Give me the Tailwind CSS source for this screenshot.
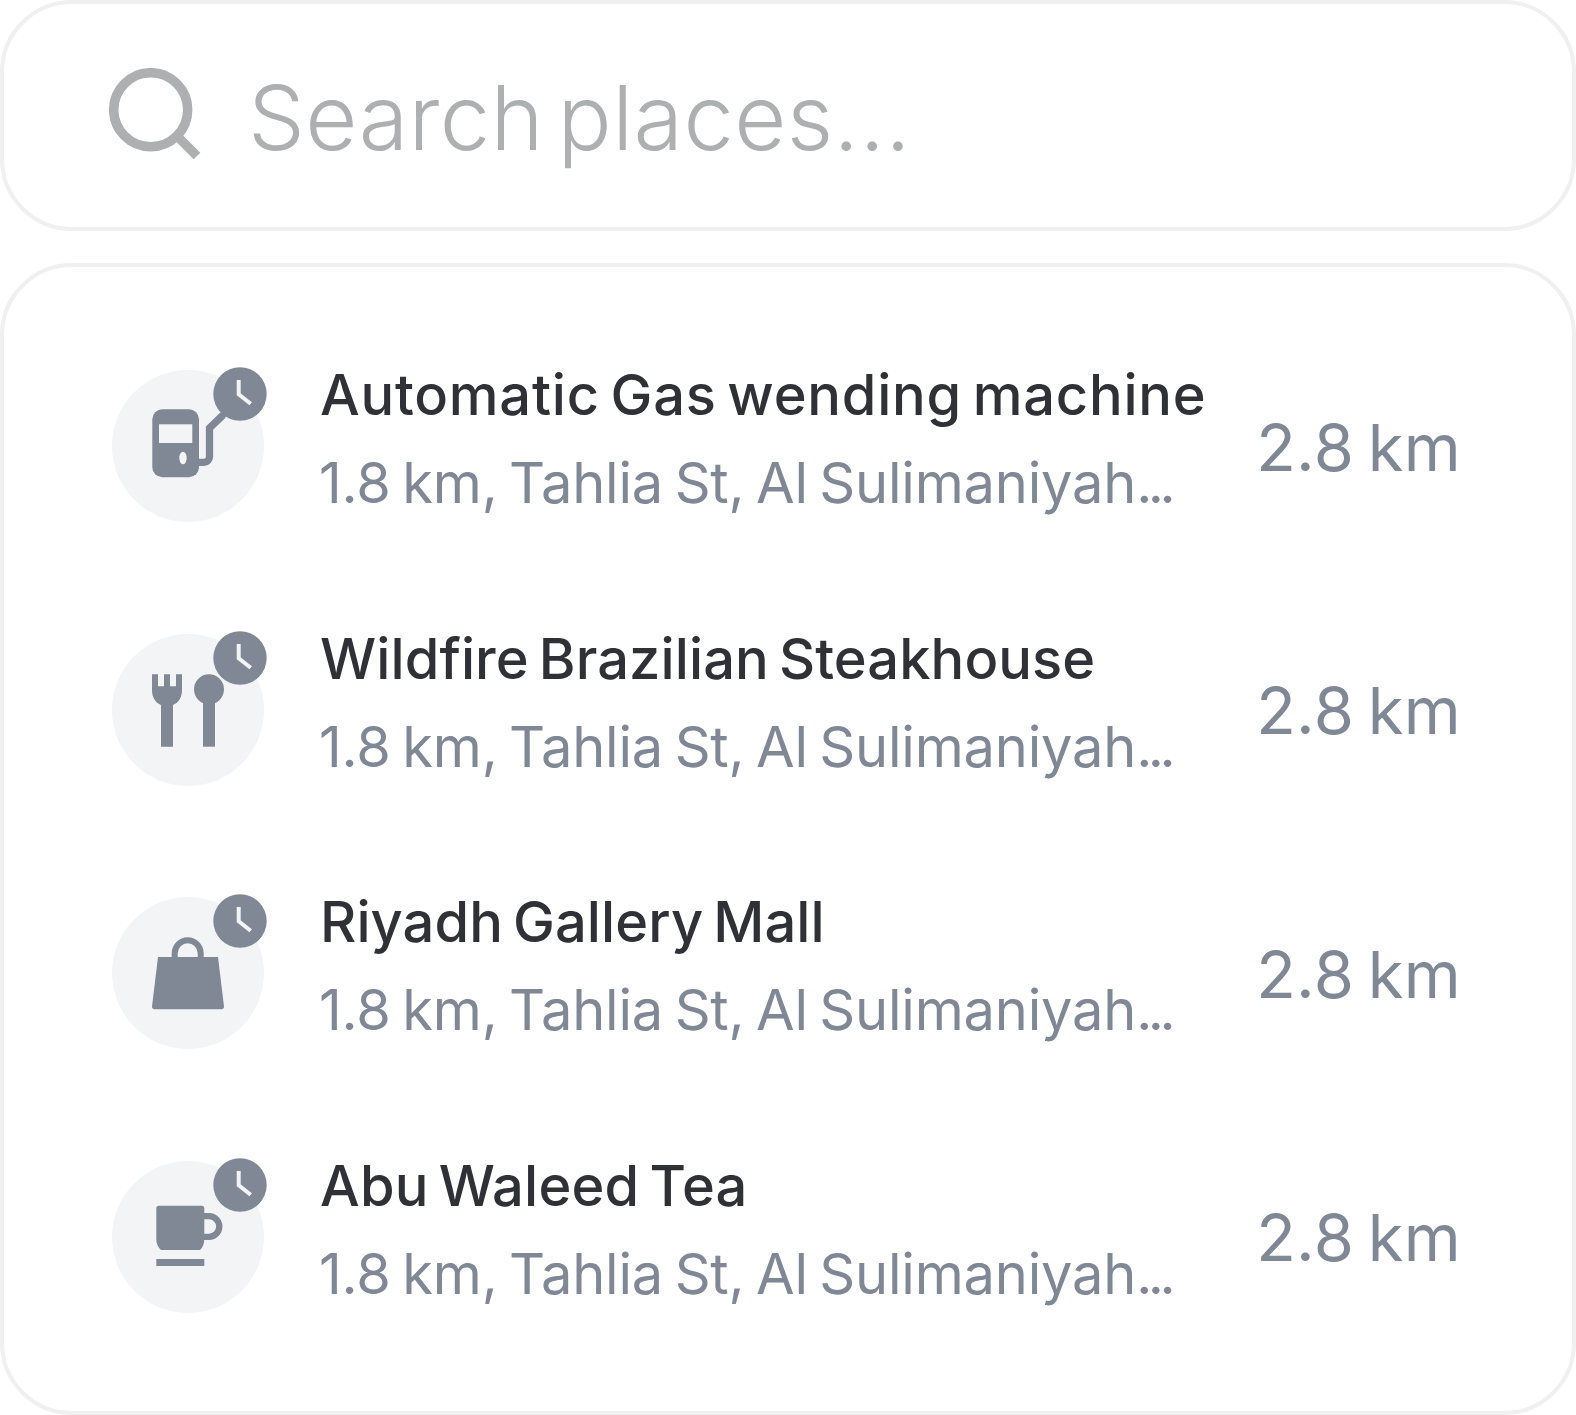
<!DOCTYPE html>
<html>
<head>
<meta charset="utf-8">
<script src="https://cdn.jsdelivr.net/npm/@tailwindcss/browser@4"></script>
</head>
<body class="bg-white font-['Inter',sans-serif]">
<div class="w-[1576px] h-[1415px] flex flex-col gap-[32px] overflow-hidden">
  <div class="h-[231px] shrink-0 border-4 border-[#f0f0f1] rounded-[72px] flex items-center pl-[105px] gap-[47px]">
    <svg class="w-[92px] h-[92px] shrink-0 -mt-[4px]" viewBox="0 0 92 92" fill="none" stroke="#adafb0" stroke-width="9.5"><circle cx="41.7" cy="41.7" r="37"/><path d="M68 68 L88 88"/></svg>
    <span class="text-[90px] leading-none font-light text-[#adafb0] tracking-[0.4px] [word-spacing:-12px] mt-[4px]">Search places...</span>
  </div>
  <div class="flex-1 border-4 border-[#f0f0f1] rounded-[72px] pl-[108px] pr-[111px] pt-[103px] flex flex-col gap-[111.67px]">

    <div class="flex items-center h-[152px]">
      <div class="relative w-[152px] h-[152px] rounded-full bg-[#f2f4f6] shrink-0">
        <svg class="absolute inset-0" width="152" height="152" viewBox="0 0 152 152" fill="none"><rect x="40.3" y="39.3" width="46.7" height="68" rx="10" fill="#808795"/><rect x="47" y="54.3" width="33.3" height="18.7" fill="#f2f4f6"/><ellipse cx="71" cy="88" rx="3.7" ry="6.3" fill="#f2f4f6"/><path d="M85 92.3H92a5.5 5.5 0 0 0 5.5-5.5V58L110 46" stroke="#808795" stroke-width="7.3" stroke-linecap="round"/></svg>
        <svg class="absolute left-[101px] -top-[3px]" width="54" height="54" viewBox="0 0 54 54" fill="none"><circle cx="27" cy="27" r="26.7" fill="#808795"/><path d="M25.7 13V27.3L37.7 36.7" stroke="#f2f4f6" stroke-width="4"/></svg>
      </div>
      <div class="ml-[55px] flex-1 min-w-0 -mt-[14px]">
        <div class="ml-[1px] text-[56px] leading-[68px] font-[550] text-[#2f3137] tracking-[0.78px] [word-spacing:-5px] whitespace-nowrap">Automatic Gas wending machine</div>
        <div class="text-[56px] leading-[68px] mt-[20px] text-[#808795] tracking-[-0.2px] [word-spacing:-4px] whitespace-nowrap">1.8 km, Tahlia St, Al Sulimaniyah<span class="tracking-[-4.5px]">...</span></div>
      </div>
      <div class="mt-[2px] text-[65px] text-[#808795] leading-none whitespace-nowrap tracking-[0.3px] [word-spacing:-5px] shrink-0">2.8 km</div>
    </div>

    <div class="flex items-center h-[152px]">
      <div class="relative w-[152px] h-[152px] rounded-full bg-[#f2f4f6] shrink-0">
        <svg class="absolute inset-0" width="152" height="152" viewBox="0 0 152 152" fill="#808795"><path d="M40 40.3H46V52.3H52V40.3H58V52.3H64V40.3H70V56C70 64 66 69 61 71V112.7H49V71C44 69 40 64 40 56Z"/><circle cx="97" cy="55.3" r="15"/><rect x="91" y="60" width="12" height="52.7"/></svg>
        <svg class="absolute left-[101px] -top-[3px]" width="54" height="54" viewBox="0 0 54 54" fill="none"><circle cx="27" cy="27" r="26.7" fill="#808795"/><path d="M25.7 13V27.3L37.7 36.7" stroke="#f2f4f6" stroke-width="4"/></svg>
      </div>
      <div class="ml-[55px] flex-1 min-w-0 -mt-[14px]">
        <div class="ml-[1px] text-[56px] leading-[68px] font-[550] text-[#2f3137] tracking-[0.1px] [word-spacing:-5px] whitespace-nowrap">Wildfire Brazilian Steakhouse</div>
        <div class="text-[56px] leading-[68px] mt-[20px] text-[#808795] tracking-[-0.2px] [word-spacing:-4px] whitespace-nowrap">1.8 km, Tahlia St, Al Sulimaniyah<span class="tracking-[-4.5px]">...</span></div>
      </div>
      <div class="mt-[2px] text-[65px] text-[#808795] leading-none whitespace-nowrap tracking-[0.3px] [word-spacing:-5px] shrink-0">2.8 km</div>
    </div>

    <div class="flex items-center h-[152px]">
      <div class="relative w-[152px] h-[152px] rounded-full bg-[#f2f4f6] shrink-0">
        <svg class="absolute inset-0" width="152" height="152" viewBox="0 0 152 152" fill="none"><path d="M46 60H106L112 109.5Q112 112.3 109.5 112.3H42.5Q40 112.3 40 109.5Z" fill="#808795"/><path d="M62.7 61V56.3a13 13 0 0 1 26 0V61" stroke="#808795" stroke-width="6"/></svg>
        <svg class="absolute left-[101px] -top-[3px]" width="54" height="54" viewBox="0 0 54 54" fill="none"><circle cx="27" cy="27" r="26.7" fill="#808795"/><path d="M25.7 13V27.3L37.7 36.7" stroke="#f2f4f6" stroke-width="4"/></svg>
      </div>
      <div class="ml-[55px] flex-1 min-w-0 -mt-[14px]">
        <div class="ml-[1px] text-[56px] leading-[68px] font-[550] text-[#2f3137] tracking-[0.1px] [word-spacing:-5px] whitespace-nowrap">Riyadh Gallery Mall</div>
        <div class="text-[56px] leading-[68px] mt-[20px] text-[#808795] tracking-[-0.2px] [word-spacing:-4px] whitespace-nowrap">1.8 km, Tahlia St, Al Sulimaniyah<span class="tracking-[-4.5px]">...</span></div>
      </div>
      <div class="mt-[2px] text-[65px] text-[#808795] leading-none whitespace-nowrap tracking-[0.3px] [word-spacing:-5px] shrink-0">2.8 km</div>
    </div>

    <div class="flex items-center h-[152px]">
      <div class="relative w-[152px] h-[152px] rounded-full bg-[#f2f4f6] shrink-0">
        <svg class="absolute inset-0" width="152" height="152" viewBox="0 0 152 152" fill="none"><path d="M47 44.7H89.5Q92.3 44.7 92.3 47.5V78Q92.3 85 88 89H49Q44.3 85 44.3 78V47.5Q44.3 44.7 47 44.7Z" fill="#808795"/><path d="M92 55.2H97a10.3 10.3 0 0 1 0 20.6H92" stroke="#808795" stroke-width="6.3"/><rect x="44.3" y="98" width="48" height="7" fill="#808795"/></svg>
        <svg class="absolute left-[101px] -top-[3px]" width="54" height="54" viewBox="0 0 54 54" fill="none"><circle cx="27" cy="27" r="26.7" fill="#808795"/><path d="M25.7 13V27.3L37.7 36.7" stroke="#f2f4f6" stroke-width="4"/></svg>
      </div>
      <div class="ml-[55px] flex-1 min-w-0 -mt-[14px]">
        <div class="ml-[1px] text-[56px] leading-[68px] font-[550] text-[#2f3137] tracking-[0.2px] [word-spacing:-5px] whitespace-nowrap">Abu Waleed Tea</div>
        <div class="text-[56px] leading-[68px] mt-[20px] text-[#808795] tracking-[-0.2px] [word-spacing:-4px] whitespace-nowrap">1.8 km, Tahlia St, Al Sulimaniyah<span class="tracking-[-4.5px]">...</span></div>
      </div>
      <div class="mt-[2px] text-[65px] text-[#808795] leading-none whitespace-nowrap tracking-[0.3px] [word-spacing:-5px] shrink-0">2.8 km</div>
    </div>

  </div>
</div>
</body>
</html>
